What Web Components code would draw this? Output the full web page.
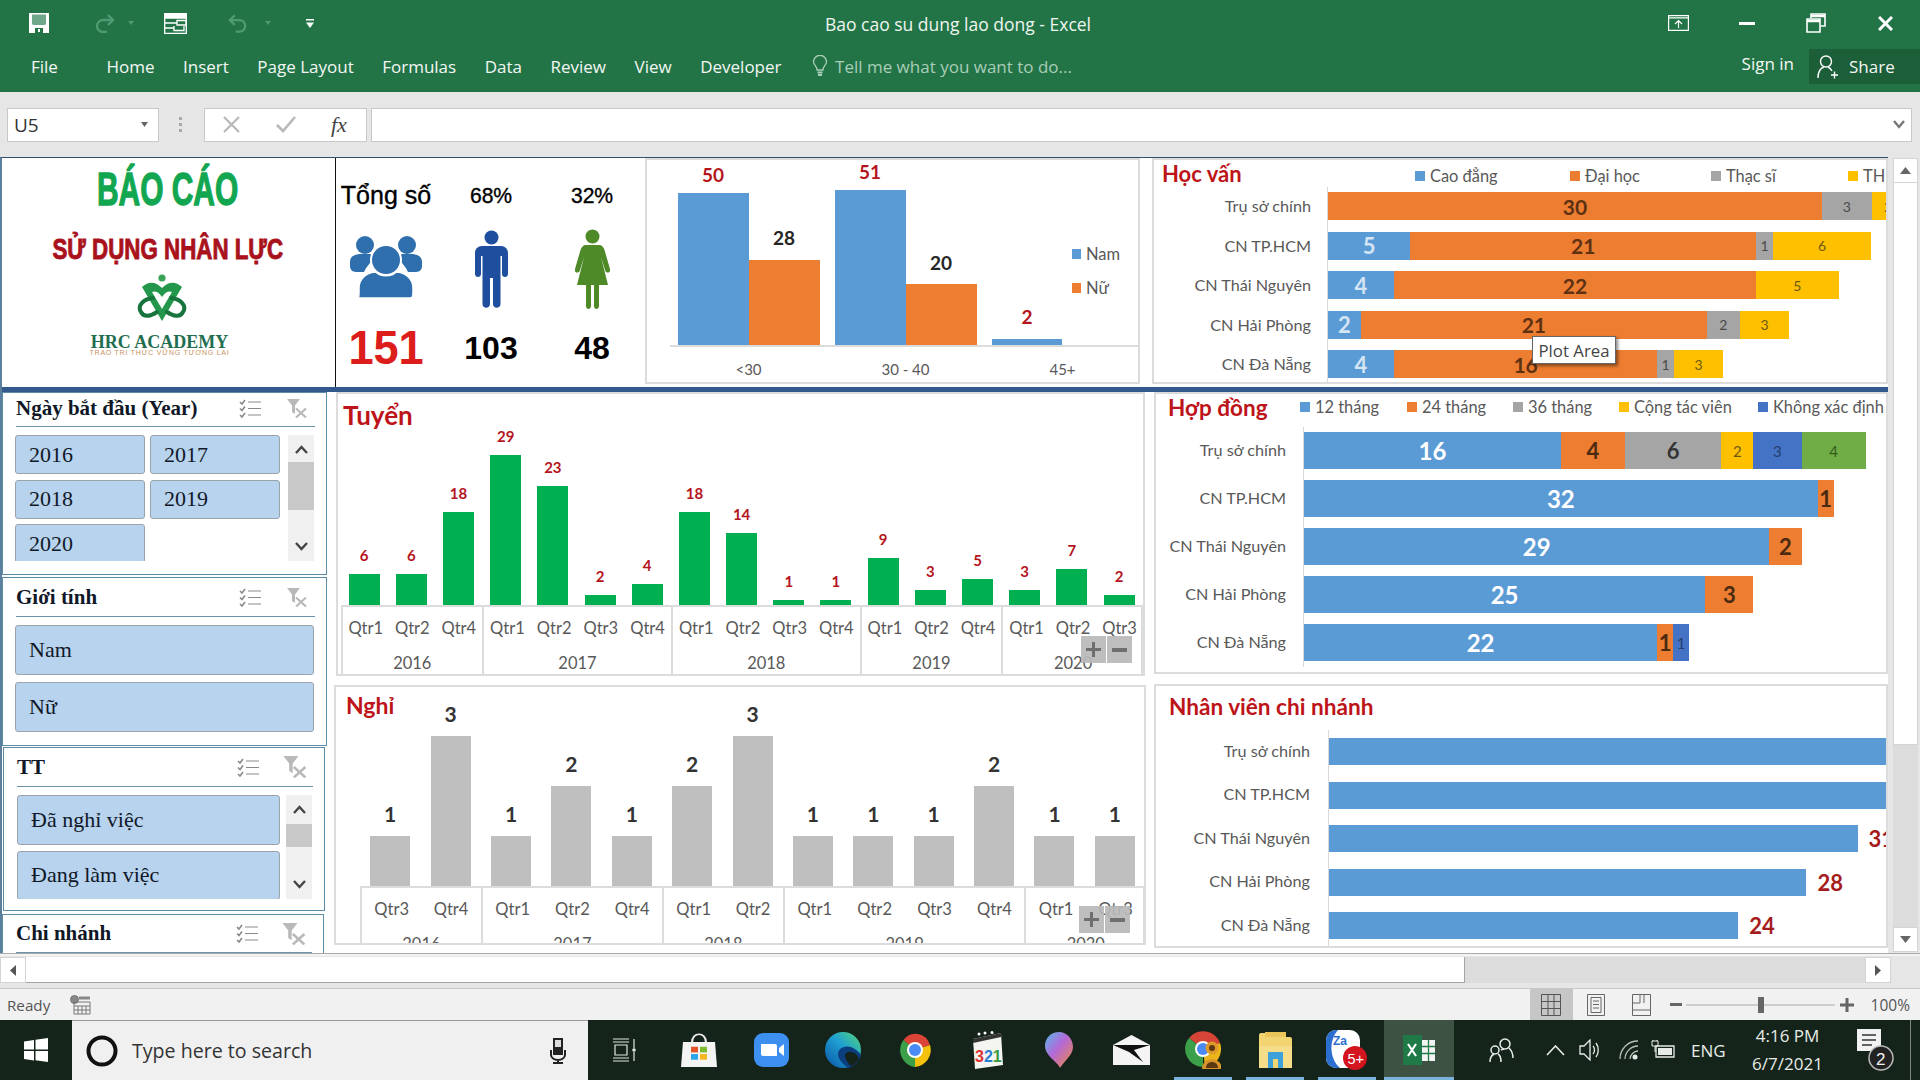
<!DOCTYPE html>
<html lang="vi"><head><meta charset="utf-8"><title>Bao cao su dung lao dong - Excel</title>
<style>
html,body{margin:0;padding:0;background:#e6e6e6}
body{width:1920px;height:1080px;overflow:hidden;display:flex;flex-direction:column;font-family:"Open Sans",sans-serif}
</style></head><body>
<xl-ribbon></xl-ribbon>
<xl-formula></xl-formula>
<xl-workspace>
  <xl-dashboard>
    <top-row slot="top">
      <logo-panel></logo-panel>
      <stats-panel></stats-panel>
      <gender-chart></gender-chart>
      <bar-chart style="width:736px;height:226px;margin-left:12px" data='{"title":"Học vấn","titleW":261,"pad":8,"ts":22,"head":26.5,"tb":0,"lt":5,"lb":0,"lh":1,"legend":[["Cao đẳng","#5b9bd5",155],["Đại học","#ed7d31",141],["Thạc sĩ","#a5a5a5",137],["THPT","#ffc000",60]],"labelW":173,"lp":16,"unit":16.47,"rowH":39.5,"barH":28,"series":[{"c":"#5b9bd5","t":"#d5e5f4","s":22,"w":700},{"c":"#ed7d31","t":"#5f3113","s":21,"w":700},{"c":"#a5a5a5","t":"#4a4a4a","s":14,"w":400},{"c":"#ffc000","t":"#6f5a14","s":14,"w":400}],"rows":[["Trụ sở chính",[0,30,3,2]],["CN TP.HCM",[5,21,1,6]],["CN Thái Nguyên",[4,22,0,5]],["CN Hải Phòng",[2,21,2,3]],["CN Đà Nẵng",[4,16,1,3]]]}'>
        <x-tip style="left:378px;top:176px">Plot Area</x-tip>
      </bar-chart>
    </top-row>
    <bottom-row slot="bottom">
      <slicer-col slot="left">
        <x-slicer style="margin:0 0 2px 2px;width:325px;height:183px" head="34" hb="2" ttl="Ngày bắt đầu (Year)" items="2016,2017,2018,2019,2020" cols="2" bh="39" sp="5.5" area="126" scroll="27,48"></x-slicer>
        <x-slicer style="margin:0 0 1px 2px;width:325px;height:169px" head="39" ttl="Giới tính" items="Nam,Nữ" cols="1" bh="50" sp="7" area="107"></x-slicer>
        <x-slicer style="margin:0 0 3px 3px;width:322px;height:164px" head="39" ttl="TT" items="Đã nghỉ việc,Đang làm việc" cols="1" bh="49.5" sp="6" area="104" scroll="29,23" bml="13" gap="6" big="1"></x-slicer>
        <x-slicer style="margin:0 0 0 2px;width:322px;height:60px" head="38" ttl="Chi nhánh" items="" cols="1" bh="40" sp="6" area="20" big="1"></x-slicer>
      </slicer-col>
      <chart-col slot="mid">
        <col-chart style="width:809px;height:284px;margin:0 0 9px 2px" data='{"title":"Tuyển","ts":26,"tx":5,"ty":6,"ml":2.5,"sw":47.2,"plot":211,"qh":42,"yh":27,"color":"#00b050","bw":31,"unit":5.17,"ls":15,"lc":"#b5151d","lh":18,"lm":10,"values":[6,6,18,29,23,2,4,18,14,1,1,9,3,5,3,7,2],"years":[["2016",["Qtr1","Qtr2","Qtr4"]],["2017",["Qtr1","Qtr2","Qtr3","Qtr4"]],["2018",["Qtr1","Qtr2","Qtr3","Qtr4"]],["2019",["Qtr1","Qtr2","Qtr4"]],["2020",["Qtr1","Qtr2","Qtr3"]]],"btn":[1081,636,336,392]}'></col-chart>
        <col-chart style="width:812px;height:260px" data='{"title":"Nghỉ","ts":23,"tx":10,"ty":3,"ml":24,"sw":60.4,"plot":199,"qh":41,"yh":30,"color":"#bfbfbf","bw":40,"unit":50,"ls":21,"lc":"#333333","lh":26,"lm":9,"values":[1,3,1,2,1,2,3,1,1,1,2,1,1],"years":[["2016",["Qtr3","Qtr4"]],["2017",["Qtr1","Qtr2","Qtr4"]],["2018",["Qtr1","Qtr2"]],["2019",["Qtr1","Qtr2","Qtr3","Qtr4"]],["2020",["Qtr1","Qtr3"]]],"btn":[1079,906,334,685]}'></col-chart>
      </chart-col>
      <chart-col slot="right">
        <bar-chart style="width:734px;height:282px;margin-bottom:10px" data='{"title":"Hợp đồng","titleW":144,"pad":12,"ts":22.5,"head":32.5,"tb":5,"lt":0,"lb":2,"lh":3,"legend":[["12 tháng","#5b9bd5",107],["24 tháng","#ed7d31",106],["36 tháng","#a5a5a5",106],["Cộng tác viên","#ffc000",139],["Không xác định","#4472c4",130]],"labelW":147,"lp":17,"unit":16.05,"rowH":48,"barH":37,"series":[{"c":"#5b9bd5","t":"#ffffff","s":24,"w":700},{"c":"#ed7d31","t":"#4b2a12","s":22,"w":700},{"c":"#a5a5a5","t":"#333333","s":22,"w":700},{"c":"#ffc000","t":"#6f5a14","s":15,"w":400},{"c":"#4472c4","t":"#24406f","s":15,"w":400},{"c":"#70ad47","t":"#335a1b","s":15,"w":400}],"rows":[["Trụ sở chính",[16,4,6,2,3,4]],["CN TP.HCM",[32,1]],["CN Thái Nguyên",[29,2]],["CN Hải Phòng",[25,3]],["CN Đà Nẵng",[22,1,0,0,1]]]}'></bar-chart>
        <bar-chart style="width:734px;height:264px" data='{"title":"Nhân viên chi nhánh","titleW":400,"pad":13,"ts":22.6,"head":43.75,"tb":2,"lt":0,"lb":0,"lh":3,"legend":[],"labelW":172,"lp":18,"unit":17.05,"rowH":43.5,"barH":27,"outside":1,"series":[{"c":"#5b9bd5","t":"#a51c1c","s":22,"w":700}],"rows":[["Trụ sở chính",[35]],["CN TP.HCM",[33]],["CN Thái Nguyên",[31]],["CN Hải Phòng",[28]],["CN Đà Nẵng",[24]]]}'></bar-chart>
      </chart-col>
    </bottom-row>
  </xl-dashboard>
  <xl-vscroll></xl-vscroll>
</xl-workspace>
<xl-hscroll></xl-hscroll>
<xl-status></xl-status>
<win-taskbar></win-taskbar>
<script>
const def=(name,css,html)=>customElements.define(name,class extends HTMLElement{
  connectedCallback(){
    if(this.shadowRoot)return;
    const r=this.attachShadow({mode:'open'});
    r.innerHTML=`<style>${css}</style>`+(typeof html==='function'?html(this):html);
  }
});
const UI='"Open Sans",sans-serif', CAL='Lato,sans-serif';
const RED='#b5151d';

/* ---------- ribbon ---------- */
def('xl-ribbon',`
:host{display:block;height:92px;background:#227447;color:#fff;font-family:${UI};flex:none}
.t{height:46px;display:grid;grid-template-columns:1fr auto 1fr;align-items:center}
.q,.w{display:flex;align-items:center}
.q{padding-left:29px}.w{justify-content:flex-end;padding-right:27px}
.ttl{font-size:17.5px;color:#eef4ef;padding:2px 4px 0 0}
.tabs{height:46px;box-sizing:border-box;padding-bottom:6px;display:flex;align-items:center;padding-left:31px;font-size:17px;gap:28.5px;color:#f4f7f4}
.tabs .f{margin-right:20px}
.tell{display:flex;align-items:center;gap:7px;color:#a9cdb7;margin-left:2px}
.r{margin-left:auto;display:flex;align-items:flex-start;align-self:flex-start;gap:15px}
.sign{margin-top:6px}
.share{width:111px;height:35px;margin-top:3px;background:#1b5e38;display:flex;align-items:center;gap:10px;padding-left:8px;box-sizing:border-box}
svg{display:block;flex:none}
`,`
<div class="t">
 <div class="q">
  <svg width="20" height="20" viewBox="0 0 20 20"><path d="M0 0H20V20H0Z" fill="#fff"/><path d="M3 1.5H17V11A2 2 0 0 1 15 12H5A2 2 0 0 1 3 11Z" fill="#6fa78a"/><path d="M6 15H14V20H6Z" fill="#227447"/><path d="M9 16H11V19H9Z" fill="#fff"/></svg>
  <svg style="margin-left:43px" width="24" height="20" viewBox="0 0 24 20" fill="none" stroke="#4f9a72" stroke-width="2.4"><path d="M21 7H11A6 6 0 0 0 11 19H15"/><path d="M16 2L21 7L16 12"/></svg>
  <svg style="margin-left:12px" width="6" height="4" viewBox="0 0 6 4"><path d="M0 0H6L3 4Z" fill="#4f9a72"/></svg>
  <svg style="margin-left:30px" width="23" height="21" viewBox="0 0 23 21" fill="none" stroke="#fff" stroke-width="1.3"><path d="M.7.7H22.3V20.3H.7Z"/><path d="M.7 1H22.3V5H.7Z" fill="#fff"/><path d="M1 10H13M13 7.5H22V12H13ZM1 15H10M10 13V17.5H20V13"/></svg>
  <svg style="margin-left:40px" width="23" height="20" viewBox="0 0 24 20" fill="none" stroke="#4f9a72" stroke-width="2.4"><path d="M3 7H13A6 6 0 0 1 13 19H9"/><path d="M8 2L3 7L8 12"/></svg>
  <svg style="margin-left:15px" width="6" height="4" viewBox="0 0 6 4"><path d="M0 0H6L3 4Z" fill="#4f9a72"/></svg>
  <svg style="margin-left:35px" width="8" height="9" viewBox="0 0 8 9"><path d="M0 0H8V1.4H0ZM0 3.5H8L4 9Z" fill="#fff"/></svg>
 </div>
 <div class="ttl">Bao cao su dung lao dong - Excel</div>
 <div class="w">
  <svg width="21" height="16" viewBox="0 0 21 16" fill="none" stroke="#fff" stroke-width="1.2"><path d="M.6.6H20.4V15.4H.6Z"/><path d="M.6 2.8H20.4M10.5 13V6M7 9L10.5 5.5L14 9"/></svg>
  <svg style="margin-left:50px" width="16" height="3" viewBox="0 0 16 3"><path d="M0 0H16V3H0Z" fill="#fff"/></svg>
  <svg style="margin-left:51px" width="20" height="20" viewBox="0 0 20 20" fill="none" stroke="#fff" stroke-width="1.6"><path d="M5 5V1H19V13H15"/><path d="M1 6H14V19H1Z"/><path d="M5 3H19M1 8H14" stroke-width="2.4"/></svg>
  <svg style="margin-left:52px" width="15" height="15" viewBox="0 0 15 15" fill="none" stroke="#fff" stroke-width="3"><path d="M1 1L14 14M14 1L1 14"/></svg>
 </div>
</div>
<div class="tabs">
 <span class="f">File</span><span>Home</span><span>Insert</span><span>Page Layout</span><span>Formulas</span><span>Data</span><span>Review</span><span>View</span><span>Developer</span>
 <span class="tell"><svg width="16" height="22" viewBox="0 0 16 22" fill="none" stroke="#a9cdb7" stroke-width="1.3"><path d="M5 15C5 11 1.5 10 1.5 6.8A6.5 6.5 0 0 1 14.5 6.8C14.5 10 11 11 11 15Z"/><path d="M5.5 17.5H10.5M6 20H10" stroke-width="1.8"/></svg>Tell me what you want to do...</span>
 <div class="r"><span class="sign">Sign in</span><div class="share"><svg width="22" height="24" viewBox="0 0 22 24" fill="none" stroke="#fff" stroke-width="1.4"><circle cx="9" cy="6.5" r="5.5"/><path d="M1 23C1 16 4 13 7 12M11 12C13 13 14 14 15 16M14 20H21M17.5 16.5V23.5"/></svg><span>Share</span></div></div>
</div>`);

/* ---------- formula bar ---------- */
def('xl-formula',`
:host{display:flex;align-items:center;height:65px;background:#e6e6e6;flex:none;font-family:${UI};box-sizing:border-box}
.b{height:34px;background:#fff;border:1px solid #c8c8c8;box-sizing:border-box;display:flex;align-items:center}
.n{margin-left:7px;width:152px;padding:0 10px 0 6px;font-size:19px;color:#333;justify-content:space-between}
.d{width:45px;display:flex;flex-direction:column;align-items:center;gap:3px;padding-right:2px;box-sizing:border-box}.d i{width:3px;height:3px;background:#a8a8a8;display:block}
.g{width:163px}
.g svg:first-child{margin-left:18px}
.g svg:nth-child(2){margin-left:36px}
.fx{margin-left:35px;font:italic 22px "Liberation Serif",serif;color:#444}
.i{margin-left:4px;width:1541px;justify-content:flex-end;padding-right:6px}
svg{display:block;flex:none}
`,`
<div class="b n"><span>U5</span><svg width="7" height="5" viewBox="0 0 7 5"><path d="M0 0H7L3.5 5Z" fill="#666"/></svg></div>
<div class="d"><i></i><i></i><i></i></div>
<div class="b g">
 <svg width="17" height="17" viewBox="0 0 17 17" fill="none" stroke="#b8b8b8" stroke-width="2.2"><path d="M1 1L16 16M16 1L1 16"/></svg>
 <svg width="20" height="17" viewBox="0 0 20 17" fill="none" stroke="#b8b8b8" stroke-width="2.6"><path d="M1 9L7 15L19 1"/></svg>
 <span class="fx">fx</span>
</div>
<div class="b i"><svg width="12" height="9" viewBox="0 0 12 9" fill="none" stroke="#777" stroke-width="2.4"><path d="M1 1L6 7L11 1"/></svg></div>`);

/* ---------- workspace frame ---------- */
def('xl-workspace',`:host{display:flex;height:796px;flex:none;background:#e6e6e6}`,`<slot></slot>`);
def('xl-dashboard',`
:host{display:block;width:1888px;height:796px;flex:none;overflow:hidden;background:#fff;border-top:1px solid #33506e;box-sizing:border-box;border-left:2px solid #5d7f9e;margin-left:0}
.band{height:5px;background:#325a8c}
::slotted([slot=top]){margin-left:-2px}
::slotted([slot=bottom]){margin-left:-2px}
`,`<slot name="top"></slot><div class="band"></div><slot name="bottom"></slot>`);
def('top-row',`:host{display:flex;height:229px;align-items:flex-start}`,`<slot></slot>`);
def('bottom-row',`:host{display:flex;height:561px}
::slotted([slot=mid]){margin-right:8px}`,`<slot name="left"></slot><slot name="mid"></slot><slot name="right"></slot>`);
def('slicer-col',`:host{display:block;width:334px;flex:none;overflow:hidden;height:561px}`,`<slot></slot>`);
def('chart-col',`:host{display:block;flex:none}`,`<slot></slot>`);

/* ---------- logo ---------- */
def('logo-panel',`
:host{display:flex;flex-direction:column;align-items:center;width:336px;height:229px;box-sizing:border-box;border-right:1px solid #111;border-left:2px solid #5d7f9e;background:#fff;flex:none;font-family:"Liberation Sans",sans-serif;padding-right:2px}
.a{font-weight:700;font-size:46px;line-height:44px;color:#12a650;-webkit-text-stroke:1.3px #12a650;transform:scaleX(.65);white-space:nowrap;margin-top:9px}
.b{font-weight:700;font-size:29px;line-height:30px;color:#a9121c;-webkit-text-stroke:.9px #a9121c;transform:scaleX(.77);white-space:nowrap;margin-top:23px}
svg{display:block;margin:10px 12px 0 0}
.c{font:700 18px/17px "Liberation Serif",serif;color:#1f6e50;margin:12px 16px 0 0;white-space:nowrap}
.d{font-size:7px;line-height:9px;letter-spacing:.75px;color:#c8925e;margin:-3px 16px 0 0;white-space:nowrap}
`,`
<div class="a">BÁO CÁO</div>
<div class="b">SỬ DỤNG NHÂN LỰC</div>
<svg width="50" height="48" viewBox="0 0 50 48" fill="none" stroke-linecap="round">
 <circle cx="25" cy="4" r="3.6" fill="#3aa257"/>
 <path fill-rule="evenodd" d="M5 13Q15 4 25 14Q35 4 45 13L25 47ZM15 18Q20 16 25 23Q30 16 35 18L25 35Z" fill="#23984c"/>
 <path d="M34 24C44 25 50 32 46 38C43 44 36 42 30 38" stroke="#17743c" stroke-width="4"/>
 <path d="M16 24C6 25 0 32 4 38C7 44 14 42 20 38" stroke="#17743c" stroke-width="4"/>
</svg>
<div class="c">HRC ACADEMY</div>
<div class="d">TRAO TRI THỨC VỮNG TƯƠNG LAI</div>`);

/* ---------- stats ---------- */
def('stats-panel',`
:host{display:grid;grid-template-columns:100px 110px 92px;grid-template-rows:71px 80px 1fr;width:309px;height:229px;flex:none;background:#fff;box-sizing:border-box;font-family:"Liberation Sans",sans-serif;color:#000;justify-items:center;align-items:center}
.h1{font-size:25px;padding-top:4px;-webkit-text-stroke:.35px #000}.h2{font-size:22px;padding-top:4px;transform:scaleX(.96);-webkit-text-stroke:.35px #000}
.big{font-weight:700;font-size:48px;color:#dd1c1c;transform:scaleX(.94);margin-bottom:2px}
.num{font-weight:700;font-size:32px}
svg{display:block}
.grp{margin-bottom:5px}
`,`
<div class="h1">Tổng số</div><div class="h2">68%</div><div class="h2">32%</div>
<svg class="grp" width="72" height="62" viewBox="0 0 72 62"><g fill="#2f6fae"><circle cx="15" cy="9" r="9"/><circle cx="57" cy="9" r="9"/><path d="M0 26C0 20 5 18 12 18H18C22 18 24 20 22 24C19 29 16 31 14 36H6C2 36 0 33 0 30Z"/><path d="M72 26C72 20 67 18 60 18H54C50 18 48 20 50 24C53 29 56 31 58 36H66C70 36 72 33 72 30Z"/></g><circle cx="36" cy="24" r="15" fill="#2f6fae" stroke="#fff" stroke-width="2"/><path d="M9 62C8 62 9 62 9 56V52C9 42 18 36 26 36C30 41 42 41 46 36C54 36 63 42 63 52V56C63 62 62 62 60 62Z" fill="#2f6fae" stroke="#fff" stroke-width="1.5"/></svg>
<svg width="33" height="78" viewBox="0 0 33 78"><g fill="#1f4e9e"><circle cx="16.5" cy="7.5" r="7"/><path d="M7 16H26C30 16 33 19 33 23V44C33 48 27 48 27 44V26H25.5V74C25.5 79 18 79 18 74V48H15V74C15 79 7.5 79 7.5 74V26H6V44C6 48 0 48 0 44V23C0 19 3 16 7 16Z"/></g></svg>
<svg width="35" height="80" viewBox="0 0 35 80"><g fill="#4f8a28"><circle cx="17.5" cy="7.5" r="7"/><path d="M11 16H24C27 16 28.5 18 29.5 21L35 40C36 44 31 45 30 41L26 28L33 56H24V77C24 81 19 81 19 77V56H16V77C16 81 11 81 11 77V56H2L9 28L5 41C4 45 -1 44 0 40L5.5 21C6.500 18 8 16 11 16Z"/></g></svg>
<div class="big">151</div><div class="num">103</div><div class="num">48</div>`);

/* ---------- gender chart ---------- */
def('gender-chart',`
:host{display:block;width:495px;height:226px;flex:none;box-sizing:border-box;border:2px solid #dcdcdc;background:#fff;font-family:${CAL};overflow:hidden}
.plot{height:185px;margin-left:23px;border-bottom:2px solid #dcdcdc;box-sizing:content-box;display:flex;align-items:flex-end}
.s{width:157px;display:flex;justify-content:center;align-items:flex-end;flex:none}
.s.x{width:78px;justify-content:flex-start;padding-left:8px;box-sizing:border-box}
.c{width:71px;display:flex;flex-direction:column;align-items:center}
.l{font-weight:700;font-size:19px;line-height:24px}
.r{color:${RED}}.k{color:#262626}
.bar{width:100%}
.leg{margin:0 0 46px 10px;display:flex;flex-direction:column;gap:12px;font-size:16.5px;line-height:22px;color:#595959}
.leg span{display:flex;align-items:center;gap:5px}
.leg i{width:9px;height:10px;display:block}
.cats{display:flex;margin-left:23px;font-size:15px;color:#595959;padding-top:13px}
.cats span{width:157px;text-align:center;flex:none}
`,()=>{
 const C=(v,c,t,m)=>`<div class="c"><div class="l ${t}" style="margin-bottom:${m}px">${v}</div><div class="bar" style="height:${v*3.04}px;background:${c}"></div></div>`;
 const B='#5b9bd5',O='#ed7d31';
 return `<div class="plot">
 <div class="s">${C(50,B,'r',6)}${C(28,O,'k',10)}</div>
 <div class="s">${C(51,B,'r',6)}${C(20,O,'k',9)}</div>
 <div class="s x">${C(2,B,'r',10)}</div>
 <div class="leg"><span><i style="background:${B}"></i>Nam</span><span><i style="background:${O}"></i>Nữ</span></div>
 </div><div class="cats"><span>&lt;30</span><span>30 - 40</span><span>45+</span></div>`;
});

/* ---------- horizontal stacked bars ---------- */
def('bar-chart',`
:host{display:block;position:relative;box-sizing:border-box;border:2px solid #dcdcdc;background:#fff;overflow:hidden;flex:none;font-family:${CAL}}
.head{display:flex;align-items:center;box-sizing:border-box}
.ttl{font-weight:700;color:#bd1419;box-sizing:border-box;white-space:nowrap;flex:none}
.leg{display:flex;font-size:16.4px;color:#595959;white-space:nowrap}
.leg span{display:flex;align-items:center;gap:5px;flex:none}
.leg i{width:10px;height:10px;display:block;flex:none}
.row{display:flex}
.lab{flex:none;box-sizing:border-box;text-align:right;font-size:16.2px;color:#595959;display:flex;align-items:center;justify-content:flex-end;white-space:nowrap}
.tr{flex:1;min-width:0;border-left:1px solid #d9d9d9;display:flex;align-items:center;overflow:hidden}
.seg{height:100%;display:flex;align-items:center;justify-content:center;flex:none;overflow:hidden}
.out{margin-left:11px;font-weight:700}
`,h=>{
 const d=JSON.parse(h.getAttribute('data'));
 const leg=d.legend.map(([n,c,w])=>`<span style="width:${w}px"><i style="background:${c}"></i>${n}</span>`).join('');
 const rows=d.rows.map(([n,v])=>{
  const segs=v.map((x,i)=>{
   if(!x)return'';const s=d.series[i];
   const txt=d.outside?'':x;
   return `<div class="seg" style="width:${x*d.unit}px;background:${s.c};color:${s.t};font-size:${s.s}px;font-weight:${s.w}">${txt}</div>`;}).join('');
  const s=d.series[0];
  return `<div class="row" style="height:${d.rowH}px"><div class="lab" style="width:${d.labelW}px;padding:0 ${d.lp}px ${d.lh}px 0">${n}</div><div class="tr"><div style="display:flex;height:${d.barH}px;flex:none">${segs}</div>${d.outside?`<span class="out" style="color:${s.t};font-size:${s.s}px;flex:none">${v[0]}</span>`:''}</div></div>`;
 }).join('');
 return `<div class="head" style="height:${d.head}px;padding-bottom:${d.tb}px"><div class="ttl" style="width:${d.titleW}px;padding-left:${d.pad}px;font-size:${d.ts}px">${d.title}</div><div class="leg" style="margin:${d.lt}px 0 ${d.lb}px">${leg}</div></div>${rows}<slot></slot>`;
});

def('x-tip',`
:host{position:absolute;z-index:3;display:flex;align-items:center;justify-content:center;width:84px;height:28px;box-sizing:border-box;background:#fff;border:1px solid #666;box-shadow:2px 2px 3px rgba(0,0,0,.45);font:16.8px ${UI};color:#444;white-space:nowrap}
`,`<slot></slot>`);

/* ---------- column chart ---------- */
def('col-chart',`
:host{display:block;position:relative;box-sizing:border-box;border:2px solid #dcdcdc;background:#fff;overflow:hidden;flex:none;font-family:${CAL}}
.w{display:grid}
.ttl{grid-area:1/1;align-self:start;justify-self:start;z-index:1;font-weight:700;line-height:30px;color:#bd1419}
.ch{grid-area:1/1;display:grid}
.cell{display:flex;flex-direction:column;justify-content:flex-end;align-items:center}
.val{font-weight:700}
.tbl{display:flex;grid-column:1/-1;border-top:2px solid #dcdcdc;border-bottom:2px solid #dcdcdc;border-right:2px solid #dcdcdc;box-sizing:content-box}
.yr{border-left:2px solid #dcdcdc;box-sizing:border-box;display:grid;color:#595959;text-align:center;font-size:16.5px;flex:none}
.yr span{align-self:center}
.yl{grid-column:1/-1}
.pm{position:absolute;display:flex;gap:1px;z-index:2}
.pm b{width:25px;height:27px;background:rgba(184,184,184,.92);display:flex;align-items:center;justify-content:center}
`,h=>{
 const d=JSON.parse(h.getAttribute('data'));
 const n=d.values.length, sw=d.sw;
 const cells=d.values.map(v=>`<div class="cell"><div class="val" style="font-size:${d.ls}px;line-height:${d.lh}px;margin-bottom:${d.lm}px;color:${d.lc}">${v}</div><div style="width:${d.bw}px;height:${v*d.unit}px;background:${d.color}"></div></div>`).join('');
 const yrs=d.years.map(([y,q])=>`<div class="yr" style="width:${q.length*sw}px;grid-template-columns:repeat(${q.length},1fr);grid-template-rows:${d.qh}px ${d.yh}px">${q.map(t=>`<span>${t}</span>`).join('')}<span class="yl">${y}</span></div>`).join('');
 const [bx,by,cx,cy]=d.btn;
 const ico=`<b><svg width="15" height="15" viewBox="0 0 15 15"><path d="M6 0H9V6H15V9H9V15H6V9H0V6H6Z" fill="#6f6f6f"/></svg></b><b><svg width="15" height="4" viewBox="0 0 15 4"><path d="M0 0H15V4H0Z" fill="#6f6f6f"/></svg></b>`;
 return `<div class="w"><div class="ttl" style="font-size:${d.ts}px;margin:${d.ty}px 0 0 ${d.tx}px">${d.title}</div>
 <div class="ch" style="margin-left:${d.ml}px;grid-template-columns:repeat(${n},${sw}px);grid-template-rows:${d.plot}px auto">${cells}<div class="tbl">${yrs}</div></div></div>
 <div class="pm" style="left:${bx-cx-2}px;top:${by-cy-2}px">${ico}</div>`;
});

/* ---------- slicer ---------- */
const listIc=`<svg width="22" height="19" viewBox="0 0 22 19" fill="none" stroke="#8a8a8a"><path d="M1 3L3 5L6 1M1 9.500L3 11.500L6 7.500M1 16L3 18L6 14" stroke-width="1.6"/><path d="M9 3H22M9 9.500H22M9 16H22" stroke-width="1"/></svg>`;
const filtIc=b=>`<svg width="${b?24:20}" height="${b?22:19}" viewBox="0 0 20 19"><path d="M0 0H13L8 6.500V15L5 13V6.500Z" fill="#b9b9b9"/><path d="M9 9.500L19 18.500M19 9.500L9 18.500" stroke="#b9b9b9" stroke-width="2.2" fill="none"/></svg>`;
def('x-slicer',`
:host{display:block;box-sizing:border-box;border:1px solid #5d8ca8;background:#fff;font-family:"Liberation Serif",serif;color:#101828;overflow:hidden}
.h{display:flex;align-items:center;margin:0 11px 0 13px;border-bottom:1px solid #6a94a8;box-sizing:border-box;font-weight:700;font-size:21px;white-space:nowrap}
.h span{flex:1}.h svg{flex:none;display:block}
.h svg:last-child{margin:0 8px 0 26px}
.h.big svg:last-child{margin:0 6px 0 24px}
.body{display:flex;margin:8px 12px 0 12px}
.items{flex:1;min-width:0;display:grid;overflow:hidden;align-content:start}
.it{box-sizing:border-box;background:#b8d3ee;border:1px solid #9aa3ac;border-radius:3px;display:flex;align-items:center;padding-left:13px;font-size:22px;white-space:nowrap}
.sb{width:26px;flex:none;background:#f0f0f0;display:flex;flex-direction:column;align-items:center;justify-content:space-between;position:relative}
.sb svg{display:block;margin:10px 0}
.th{position:absolute;left:0;right:0;background:#c8c8c8}
`,h=>{
 const g=a=>h.getAttribute(a);
 const items=g('items')?g('items').split(','):[];
 const sc=g('scroll');
 const colT=g('cols')=='2'?'130px 130px':'1fr';
 const ch=s=>`<svg width="13" height="9" viewBox="0 0 13 9" fill="none" stroke="#444" stroke-width="2.4"><path d="${s}"/></svg>`;
 const tb=sc?sc.split(','):null;
 return `<div class="h ${g('big')?'big':''}" style="height:${g('head')}px;padding-bottom:${g('hb')||0}px"><span>${g('ttl')}</span>${listIc}${filtIc(g('big'))}</div>
 <div class="body" style="height:${g('area')}px;margin-left:${g('bml')||12}px;gap:${g('gap')||8}px"><div class="items" style="grid-template-columns:${colT};grid-auto-rows:${g('bh')}px;gap:${g('sp')}px 5px">${items.map(i=>`<div class="it">${i}</div>`).join('')}</div>
 ${sc?`<div class="sb">${ch('M1 8L6.500 2L12 8')}<div class="th" style="top:${tb[0]}px;height:${tb[1]}px"></div>${ch('M1 1L6.500 7L12 1')}</div>`:''}</div>`;
});

/* ---------- scrollbars ---------- */
def('xl-vscroll',`
:host{display:flex;flex-direction:column;width:25px;margin:1px 0 1px 5px;height:794px;flex:none;background:#dcdcdc}
.b{height:25px;background:#fff;border:1px solid #d4d4d4;box-sizing:border-box;display:flex;align-items:center;justify-content:center;flex:none}
.t{height:562px;background:#fff;border:1px solid #d4d4d4;border-top:0;box-sizing:border-box;flex:none}
.s{flex:1}
`,`<div class="b"><svg width="11" height="7" viewBox="0 0 11 7"><path d="M5.500 0L11 7H0Z" fill="#666"/></svg></div><div class="t"></div><div class="s"></div><div class="b"><svg width="11" height="7" viewBox="0 0 11 7"><path d="M5.500 7L11 0H0Z" fill="#666"/></svg></div>`);
def('xl-hscroll',`
:host{display:flex;height:35px;flex:none;box-sizing:border-box;border-top:1px solid #a9a9a9;padding:3px 29px 5px 0;background:#e6e6e6;width:1920px;box-shadow:inset 0 2px 0 #f3f3f3}
.b{width:26px;background:#fff;border:1px solid #d4d4d4;box-sizing:border-box;flex:none;display:flex;align-items:center;justify-content:center}
.t{width:1439px;background:#fff;border-bottom:1px solid #a5a5a5;border-right:1px solid #a5a5a5;box-sizing:border-box;flex:none}
.s{flex:1;background:#dcdcdc}
`,`<div class="b"><svg width="6" height="11" viewBox="0 0 6 11"><path d="M0 5.500L6 0V11Z" fill="#555"/></svg></div><div class="t"></div><div class="s"></div><div class="b"><svg width="6" height="11" viewBox="0 0 6 11"><path d="M6 5.500L0 0V11Z" fill="#555"/></svg></div>`);

/* ---------- status bar ---------- */
def('xl-status',`
:host{display:flex;align-items:center;height:32px;flex:none;background:#f1f1f1;border-top:1px solid #c8c8c8;box-sizing:border-box;font-family:${UI};font-size:15.2px;color:#555;padding-left:7px}
svg{display:block;flex:none}
.sel{margin-left:auto;width:43px;height:32px;background:#c6c6c6;display:flex;align-items:center;justify-content:center}
`,`
<span>Ready</span>
<svg style="margin-left:20px" width="21" height="20" viewBox="0 0 21 20" fill="none" stroke="#777"><circle cx="4.500" cy="4.500" r="4" fill="#888"/><path d="M4 7H20V19H4ZM4 11H20M4 15H20M8 11V19M12 11V19M16 11V19"/><path d="M9 3H20" stroke-width="3" stroke="#888"/></svg>
<div class="sel"><svg width="20" height="22" viewBox="0 0 20 22" fill="none" stroke="#555"><path d="M.5.5H19.500V21.500H.5ZM.5 7.500H19.500M.5 14.500H19.500M7 .5V21.500M13 .5V21.500"/></svg></div>
<svg style="margin-left:14px" width="18" height="22" viewBox="0 0 18 22" fill="none" stroke="#666"><path d="M.5.5H17.500V21.500H.5Z"/><path d="M4 3.500H14V18.500H4ZM6 7H12M6 10.500H12M6 14H12"/></svg>
<svg style="margin-left:27px" width="19" height="22" viewBox="0 0 19 22" fill="none" stroke="#666"><path d="M.5.5H18.500V21.500H.5ZM.5 16H18.500M8 .5V9H.5M12 .5V9" /></svg>
<svg style="margin-left:19px" width="12" height="3" viewBox="0 0 12 3"><path d="M0 0H12V3H0Z" fill="#666"/></svg>
<svg style="margin-left:4px" width="149" height="20" viewBox="0 0 149 20"><path d="M0 10H149" stroke="#a9a9a9"/><path d="M72 2H78V18H72Z" fill="#666"/></svg>
<svg style="margin-left:5px" width="14" height="14" viewBox="0 0 14 14"><path d="M5.500 0H8.500V5.500H14V8.500H8.500V14H5.500V8.500H0V5.500H5.500Z" fill="#666"/></svg>
<span style="margin:0 10px 0 17px;font-size:15.5px">100%</span>`);

/* ---------- taskbar ---------- */
def('tb-slot',`
:host{display:flex;align-items:center;justify-content:center;height:60px;width:72px;flex:none;box-sizing:border-box;position:relative}
:host([on]){background:linear-gradient(#78b4dc,#78b4dc) no-repeat center bottom/58px 3px}
:host([sel]){width:70px;background:#3e5244 linear-gradient(#78b4dc,#78b4dc) no-repeat bottom/100% 3px;margin-left:1px}
`,`<slot></slot>`);
def('win-taskbar',`
:host{display:flex;align-items:center;height:60px;flex:none;background:#14241a;color:#e8ece8;font-family:${UI}}
svg{display:block;flex:none}
.st{width:72px;display:flex;justify-content:center;flex:none}
.se{width:516px;height:60px;background:#f0f0f0;border-top:1px solid #9a9a9a;box-sizing:border-box;display:flex;align-items:center;flex:none;font-size:19.6px;color:#333;padding-left:14px}
.se span{margin-left:14px;flex:1}
.clock{width:73px;margin-left:25px;text-align:center;font-size:17px;line-height:28px;flex:none;white-space:nowrap;display:flex;flex-direction:column;align-items:center}
.eng{margin-left:16px;font-size:17px;width:35px;flex:none}
.end{width:1px;height:60px;background:#7f8a80;margin-left:16px;flex:none}
`,`
<div class="st"><svg width="24" height="24" viewBox="0 0 24 24"><path d="M0 3.500L10 2V11.500H0ZM11.500 1.800L24 0V11.500H11.500ZM0 13H10V22.500L0 21ZM11.500 13H24V24L11.500 22.200Z" fill="#fff"/></svg></div>
<div class="se">
 <svg width="32" height="34" viewBox="0 0 32 34"><circle cx="16" cy="17" r="13.500" fill="none" stroke="#111" stroke-width="4"/></svg>
 <span>Type here to search</span>
 <svg style="margin-right:22px" width="16" height="26" viewBox="0 0 16 26"><path d="M3 0H13V17H3Z" fill="#222"/><path d="M5 2H11V9H5Z" fill="#ddd"/><path d="M1 12V17A7 5 0 0 0 15 17V12M8 22V25M3 25H13" fill="none" stroke="#222" stroke-width="2"/></svg>
</div>
<tb-slot><svg width="25" height="24" viewBox="0 0 25 24" fill="none" stroke="#dfe6df" stroke-width="1.200"><path d="M1 1H17M1 4H17M1 20H17M1 23H17M3 7H15V17H3ZM22 1V10M22 14V23"/><circle cx="22" cy="12" r="1.200" fill="#dfe6df"/></svg></tb-slot>
<tb-slot style="margin-left:3px"><svg width="36" height="34" viewBox="0 0 36 42" preserveAspectRatio="none"><path d="M2 11H34L36 42H0Z" fill="#f4f4f4"/><path d="M11 12C11 -2 25 -2 25 12" fill="none" stroke="#eee" stroke-width="2"/><path d="M10 17H17V24H10Z" fill="#e4542b"/><path d="M19 17H26V24H19Z" fill="#7cbb2f"/><path d="M10 26H17V33H10Z" fill="#2aa5e8"/><path d="M19 26H26V33H19Z" fill="#f6b821"/></svg></tb-slot>
<tb-slot><svg width="35" height="34" viewBox="0 0 35 34"><rect width="35" height="34" rx="9" fill="#3d8ff0"/><path d="M7 11H21A2 2 0 0 1 23 13V23H9A2 2 0 0 1 7 21ZM25 15L30 11V23L25 19Z" fill="#fff"/></svg></tb-slot>
<tb-slot><svg width="36" height="36" viewBox="0 0 36 36"><defs><linearGradient id="e" x1="1" y1="0" x2="0" y2="1"><stop offset="0" stop-color="#56d878"/><stop offset=".45" stop-color="#1e9fd2"/><stop offset="1" stop-color="#0b55a4"/></linearGradient></defs><circle cx="18" cy="18" r="18" fill="url(#e)"/><path d="M13 22C13 16 20 13 26 15C31 17 34 20 36 23C34 30 30 34 23 36C17 31 13 27 13 22Z" fill="#0b3f7f"/><path d="M20 24C20 20 24 19 27 20C31 21 33 24 34 27C32 31 29 33 26 34C23 31 20 27 20 24Z" fill="#14241a"/></svg></tb-slot>
<tb-slot><svg width="34" height="34" viewBox="0 0 34 34"><path d="M17 17L5.500 7A15.500 17 0 0 1 32 12Z" fill="#db4437"/><path d="M17 17L32 12A17 17 0 0 1 17 34Z" fill="#f4c20d"/><path d="M17 17V34A17 17 0 0 1 5.500 7Z" fill="#3c9f4a"/><circle cx="17" cy="17" r="8" fill="#fff"/><circle cx="17" cy="17" r="6" fill="#4a8af4"/></svg></tb-slot>
<tb-slot><svg width="32" height="38" viewBox="0 0 32 38"><path d="M2 8L30 2L32 34L4 38Z" fill="#f4f4f0"/><path d="M2 8L30 2L30 6L2 12Z" fill="#333"/><g fill="#fff"><circle cx="8" cy="3" r="1.500"/><circle cx="14" cy="2" r="1.500"/><circle cx="21" cy="1.500" r="1.500"/></g><text x="4" y="31" font-size="16" font-family="Liberation Sans" font-weight="700"><tspan fill="#d33">3</tspan><tspan fill="#2a7fd0">2</tspan><tspan fill="#3a9a3a">1</tspan></text></svg></tb-slot>
<tb-slot><svg width="28" height="36" viewBox="0 0 28 36"><defs><linearGradient id="p" x1="0" y1="0" x2="1" y2="1"><stop offset="0" stop-color="#57b8e8"/><stop offset=".45" stop-color="#b469d8"/><stop offset="1" stop-color="#f08a3c"/></linearGradient></defs><path d="M14 0C22 0 28 7 28 15C28 23 20 28 15 36C13 30 0 24 0 14C0 6 6 0 14 0Z" fill="url(#p)"/></svg></tb-slot>
<tb-slot><svg width="37" height="30" viewBox="0 0 37 30"><path d="M0 10L18.500 0L37 10V30H0Z" fill="#f4f4f4"/><path d="M0 10H37L21 15L30 27L16 17Z" fill="#111"/></svg></tb-slot>
<tb-slot on><svg width="36" height="38" viewBox="0 0 36 38"><path d="M18 18L4 7A18 18 0 0 1 35 12Z" fill="#d64437"/><path d="M18 18L35 12A18 18 0 0 1 20 36Z" fill="#e9b51a"/><path d="M18 18V36A18 18 0 0 1 4 7Z" fill="#3c9f4a"/><circle cx="18" cy="18" r="8" fill="#fff"/><circle cx="18" cy="18" r="6" fill="#4a8af4"/><circle cx="27" cy="17" r="6.500" fill="#e09a2a"/><path d="M17 38C17 25 37 25 37 38Z" fill="#d8932a"/><circle cx="27" cy="17" r="3" fill="#5d3710"/><path d="M21 37C21 29 33 29 33 37Z" fill="#5d3710"/></svg></tb-slot>
<tb-slot on><svg width="33" height="36" viewBox="0 0 33 36"><path d="M0 3A2 2 0 0 1 2 1H12L15 5H31A2 2 0 0 1 33 7V36H0Z" fill="#f2d472"/><path d="M6 0H27V5H6Z" fill="#e8c45a"/><path d="M0 14H33V36H0Z" fill="#f5dd8a"/><path d="M9 20H24V36H9Z" fill="#3ea1d9"/><path d="M14 27H19V36H14Z" fill="#f2d472"/></svg></tb-slot>
<tb-slot on><svg width="42" height="40" viewBox="0 0 42 40"><rect x="0" y="0" width="34" height="38" rx="10" fill="#fff"/><path d="M0 10A10 10 0 0 1 10 0H12C3 10 3 28 14 38H10A10 10 0 0 1 0 28Z" fill="#2a6fd0"/><text x="7" y="15" font-size="12" font-weight="700" font-family="Liberation Sans" fill="#2a6fd0">Za</text><circle cx="29" cy="28" r="12" fill="#d3151f"/><text x="21.500" y="33.500" font-size="14.500" font-family="Liberation Sans" fill="#fff">5+</text></svg></tb-slot>
<tb-slot sel><svg width="32" height="32" viewBox="0 0 32 32"><path d="M0 1H19V31H0Z" fill="#1f7a47"/><path d="M19 6H32V27H19Z" fill="#f4f4f4"/><path d="M19 12.500H32M19 19.500H32M25.500 6V27" stroke="#1f7a47" stroke-width="1.300"/><path d="M5 10L13 22M13 10L5 22" stroke="#fff" stroke-width="2.200"/></svg></tb-slot>
<svg style="margin-left:35px" width="25" height="26" viewBox="0 0 25 26" fill="none" stroke="#e8ece8" stroke-width="1.500"><circle cx="16" cy="7" r="5"/><circle cx="6" cy="13" r="4"/><path d="M1 25C1 20 3 18 5 17M9 17C11 18 12 21 12 25M12 13C14 12 14 12 15 12M20 11C22 13 24 16 24 21"/></svg>
<svg style="margin-left:32px" width="19" height="11" viewBox="0 0 19 11" fill="none" stroke="#e8ece8" stroke-width="1.600"><path d="M1 10L9.500 1L18 10"/></svg>
<svg style="margin-left:14px" width="22" height="22" viewBox="0 0 22 22" fill="none" stroke="#e8ece8" stroke-width="1.300"><path d="M1 7H5L11 1V21L5 15H1Z"/><path d="M14 7C16 9 16 13 14 15M17 4C20 8 20 14 17 18"/></svg>
<svg style="margin-left:18px" width="20" height="20" viewBox="0 0 20 20" fill="none" stroke="#b8c0b8" stroke-width="1.300"><path d="M1 19C1 9 9 1 19 1M6 19C6 12 12 6 19 6M11 19C11 15 15 11 19 11"/><circle cx="16" cy="17" r="2.500" fill="#e8ece8" stroke="none"/></svg>
<svg style="margin-left:12px" width="24" height="20" viewBox="0 0 24 20"><path d="M5 6H23V17H5Z" fill="none" stroke="#e8ece8" stroke-width="1.300"/><path d="M7 8H21V15H7Z" fill="#e8ece8"/><path d="M1 1H7V6H1ZM2 0V1M6 0V1M4 6V12" stroke="#e8ece8" fill="none"/></svg>
<span class="eng">ENG</span>
<div class="clock"><div>4:16 PM</div><div>6/7/2021</div></div>
<svg style="margin-left:33px" width="37" height="42" viewBox="0 0 37 42"><path d="M0 0H24V22H17L13 28V22H0Z" fill="#f2f2f2"/><path d="M5 6H19M5 11H19M5 16H15" stroke="#333" stroke-width="1.300"/><circle cx="24" cy="29" r="12" fill="#222" stroke="#bbb" stroke-width="1.500"/><text x="19" y="35.500" font-size="17" font-family="Liberation Sans" fill="#f2f2f2">2</text></svg>
<div class="end"></div>`);
</script>
</body></html>
